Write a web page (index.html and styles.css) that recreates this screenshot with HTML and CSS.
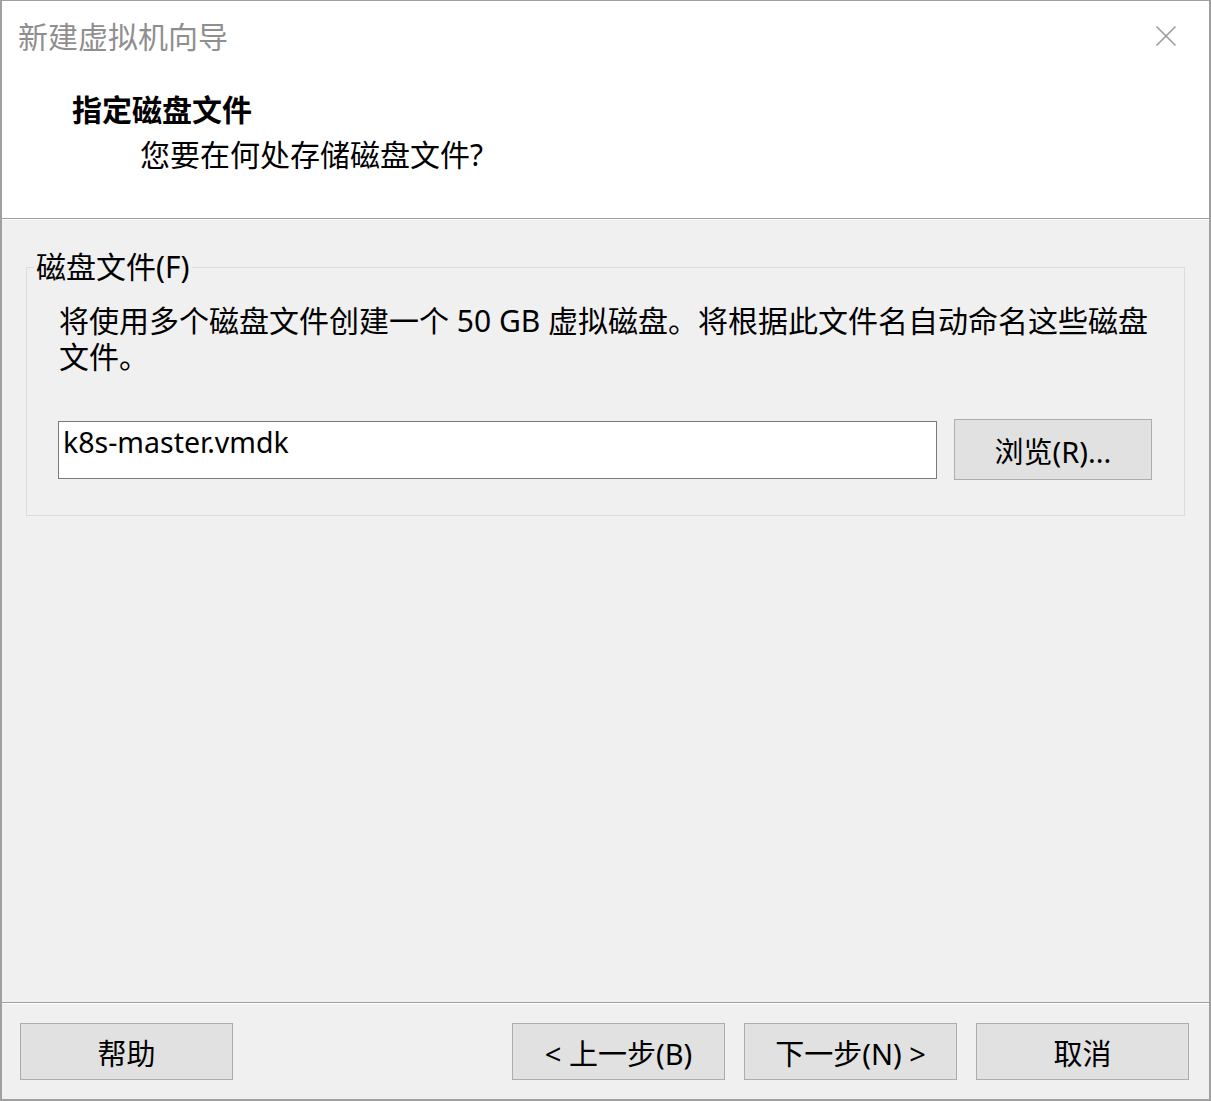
FILE: index.html
```html
<!DOCTYPE html>
<html lang="zh-CN">
<head>
<meta charset="utf-8">
<title>新建虚拟机向导</title>
<link rel="stylesheet" href="styles.css">
</head>
<body>
<div class="window">
  <div class="header">
    <div class="titlebar">
      <span class="title">新建虚拟机向导</span>
      <span class="close">
        <svg width="22" height="22" viewBox="0 0 22 22"><path d="M1.5 1.5 L20.5 20.5 M20.5 1.5 L1.5 20.5" stroke="#9a9a9a" stroke-width="1.6" fill="none"/></svg>
      </span>
    </div>
    <div class="heading">指定磁盘文件</div>
    <div class="subheading">您要在何处存储磁盘文件?</div>
  </div>
  <div class="content">
    <fieldset class="group">
      <legend class="group-label">磁盘文件(F)</legend>
      <div class="group-body">
        <p class="desc"><span class="line">将使用多个磁盘文件创建一个 50 GB 虚拟磁盘。将根据此文件名自动命名这些磁盘</span><span class="line">文件。</span></p>
        <div class="file-row">
          <input class="file-input" type="text" value="k8s-master.vmdk">
          <button class="btn btn-browse">浏览(R)...</button>
        </div>
      </div>
    </fieldset>
  </div>
  <div class="footer">
    <button class="btn btn-foot">帮助</button>
    <button class="btn btn-foot push">&lt; 上一步(B)</button>
    <button class="btn btn-foot">下一步(N) &gt;</button>
    <button class="btn btn-foot">取消</button>
  </div>
</div>
</body>
</html>
```
FILE: styles.css
```css
* { box-sizing: border-box; }
html, body { margin: 0; padding: 0; background: #f0f0f0; }
body {
  font-family: "Noto Sans", "Noto Sans CJK SC", sans-serif;
  font-size: 30px;
  color: #000;
}
.window {
  width: 1211px;
  height: 1101px;
  border-top: 1px solid #a0a0a0;
  border-left: 2px solid #a0a0a0;
  border-right: 2px solid #a0a0a0;
  border-bottom: 2px solid #a0a0a0;
  background: #f0f0f0;
  display: flex;
  flex-direction: column;
}
.header {
  height: 218px;
  background: #fff;
  border-bottom: 1px solid #a0a0a0;
  flex: none;
}
.titlebar {
  height: 72px;
  display: flex;
  align-items: center;
  justify-content: space-between;
  padding-left: 16px;
  padding-right: 32px;
}
.title {
  color: #8f8f8f;
  font-size: 30px;
  line-height: 40px;
}
.close { display: flex; width: 22px; height: 22px; margin-top: -2px; }
.heading {
  margin-top: 17px;
  padding-left: 70px;
  font-size: 30px;
  font-weight: bold;
  line-height: 40px;
}
.subheading {
  margin-top: 5px;
  padding-left: 138px;
  font-size: 30px;
  line-height: 40px;
}
.content {
  flex: 1;
  border-top: 1px solid #fff;
  padding: 29px 24px 0 24px;
}
.group {
  margin: 0;
  padding: 0;
  width: 1159px;
  border: 1px solid #dcdcdc;
}
.group-label {
  margin-left: 7px;
  padding: 0 2px;
  line-height: 36px;
  font-size: 30px;
}
.group-body {
  padding: 18px 31px 35px 31px;
}
.desc {
  margin: 0 0 0 1px;
  font-size: 30px;
  display: flex;
  flex-direction: column;
}
.desc .line {
  display: block;
  height: 36px;
  line-height: 36px;
  white-space: nowrap;
}
.file-row {
  margin-top: 44px;
  display: flex;
  align-items: center;
  gap: 17px;
}
.file-input {
  width: 879px;
  height: 58px;
  border: 1px solid #7a7a7a;
  background: #fff;
  font-family: "Noto Sans", sans-serif;
  font-size: 28.5px;
  color: #000;
  padding: 0 0 16px 4px;
  outline: none;
}
.btn {
  font-family: "Noto Sans", "Noto Sans CJK SC", sans-serif;
  font-size: 29px;
  color: #000;
  background: #e1e1e1;
  border: 1px solid #adadad;
  padding: 0;
  margin: 0;
}
.btn-browse { width: 198px; height: 61px; }
.footer {
  flex: none;
  height: 97px;
  border-top: 1px solid #a0a0a0;
  box-shadow: inset 0 1px 0 #fff;
  padding: 20px 20px 19px 18px;
  display: flex;
  gap: 19px;
}
.btn-foot { width: 213px; height: 57px; }
.push { margin-left: auto; }
```
